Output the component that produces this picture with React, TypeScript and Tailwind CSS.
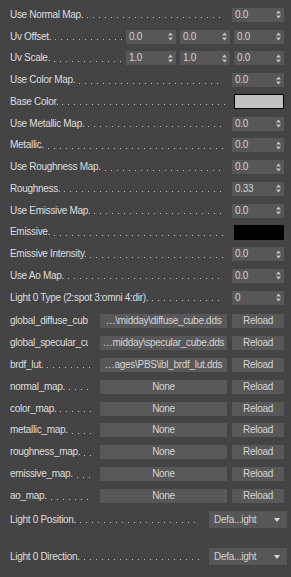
import React from 'react';

function Leader({ text, className = '' }: { text: string; className?: string }) {
  return (
    <div className={`flex min-w-0 items-center ${className}`}>
      <span className="min-w-0 overflow-hidden whitespace-nowrap">{text}.</span>
      <div className="mt-[6px] ml-[4px] h-[1px] min-w-0 flex-1 bg-[linear-gradient(to_right,#bdbdbd_1px,transparent_1px)] bg-[length:6px_1px]" />
    </div>
  );
}

function Arrows() {
  return (
    <svg width="5" height="9" viewBox="0 0 5 9" className="shrink-0">
      <path d="M2.5 0.5L5 3.5H0z" fill="#c4c4c4" />
      <path d="M0 5.5h5L2.5 8.5z" fill="#c4c4c4" />
    </svg>
  );
}

function Spin({ value, wide = false }: { value: string; wide?: boolean }) {
  return (
    <div
      className={`flex h-[14px] shrink-0 items-center justify-between bg-[#575757] pl-[3px] pr-[3px] text-[#d2d2d2] ${
        wide ? 'w-[52px]' : 'w-[50px]'
      }`}
    >
      <span>{value}</span>
      <Arrows />
    </div>
  );
}

function Swatch({ color }: { color: string }) {
  return <div className={`h-[15px] w-[50px] shrink-0 border border-black ${color}`} />;
}

type Row = { label: string; kind: 'spin' | 'swatch' | 'triple'; value?: string; values?: string[]; color?: string };

const ROWS: Row[] = [
  { label: 'Use Normal Map', kind: 'spin', value: '0.0' },
  { label: 'Uv Offset', kind: 'triple', values: ['0.0', '0.0', '0.0'] },
  { label: 'Uv Scale', kind: 'triple', values: ['1.0', '1.0', '0.0'] },
  { label: 'Use Color Map', kind: 'spin', value: '0.0' },
  { label: 'Base Color', kind: 'swatch', color: 'bg-[#c0c0c0]' },
  { label: 'Use Metallic Map', kind: 'spin', value: '0.0' },
  { label: 'Metallic', kind: 'spin', value: '0.0' },
  { label: 'Use Roughness Map', kind: 'spin', value: '0.0' },
  { label: 'Roughness', kind: 'spin', value: '0.33' },
  { label: 'Use Emissive Map', kind: 'spin', value: '0.0' },
  { label: 'Emissive', kind: 'swatch', color: 'bg-black' },
  { label: 'Emissive Intensity', kind: 'spin', value: '0.0' },
  { label: 'Use Ao Map', kind: 'spin', value: '0.0' },
  { label: 'Light 0 Type (2:spot 3:omni 4:dir)', kind: 'spin', value: '0' },
];

const MAPS = [
  { label: 'global_diffuse_cube', file: '…\\midday\\diffuse_cube.dds' },
  { label: 'global_specular_cube', file: '…midday\\specular_cube.dds' },
  { label: 'brdf_lut', file: '…ages\\PBS\\ibl_brdf_lut.dds' },
  { label: 'normal_map', file: 'None' },
  { label: 'color_map', file: 'None' },
  { label: 'metallic_map', file: 'None' },
  { label: 'roughness_map', file: 'None' },
  { label: 'emissive_map', file: 'None' },
  { label: 'ao_map', file: 'None' },
];

function Dropdown() {
  return (
    <div className="flex h-[17px] w-[78px] shrink-0 items-center justify-between bg-[#575757] pl-[5px] pr-[7px] text-[#d2d2d2]">
      <span>Defa...ight</span>
      <svg width="6" height="4" viewBox="0 0 6 4">
        <path d="M0 0h6L3 4z" fill="#d8d8d8" />
      </svg>
    </div>
  );
}

export default function App() {
  return (
    <div className="h-[577px] w-[291px] overflow-hidden bg-[#444444] pt-[4px] font-['Liberation_Sans',Arial,sans-serif] text-[10px] leading-[14px] tracking-[-0.3px] text-[#dedede]">
      {ROWS.map((r) => (
        <div key={r.label} className="flex h-[21.75px] items-center pl-[10px] pr-[7px]">
          {r.kind === 'triple' ? (
            <>
              <Leader text={r.label} className="flex-1 pr-[3px]" />
              <div className="flex gap-[4px]">
                {r.values!.map((v, i) => (
                  <Spin key={i} value={v} />
                ))}
              </div>
            </>
          ) : (
            <>
              <Leader text={r.label} className="flex-1 pr-[9px]" />
              {r.kind === 'spin' ? <Spin value={r.value!} wide /> : <Swatch color={r.color!} />}
            </>
          )}
        </div>
      ))}

      <div className="mt-[1.5px]">
        {MAPS.map((m) => (
          <div key={m.label} className="flex h-[21.9px] items-center pl-[10px] pr-[7px]">
            <Leader text={m.label} className="w-[86px] shrink-0 pr-[4px]" />
            <div className="ml-[4px] flex h-[14px] min-w-0 flex-1 items-center justify-center overflow-hidden whitespace-nowrap bg-[#585858] text-[#d4d4d4]">
              {m.file}
            </div>
            <div className="ml-[5px] flex h-[14px] w-[52px] shrink-0 items-center justify-center bg-[#585858] text-[#d4d4d4]">
              Reload
            </div>
          </div>
        ))}
      </div>

      <div className="flex h-[25px] items-center pl-[10px] pr-[4px]">
        <Leader text="Light 0 Position" className="flex-1 pr-[9px]" />
        <Dropdown />
      </div>
      <div className="h-[12px]" />
      <div className="flex h-[25px] items-center pl-[10px] pr-[4px]">
        <Leader text="Light 0 Direction" className="flex-1 pr-[9px]" />
        <Dropdown />
      </div>
    </div>
  );
}
